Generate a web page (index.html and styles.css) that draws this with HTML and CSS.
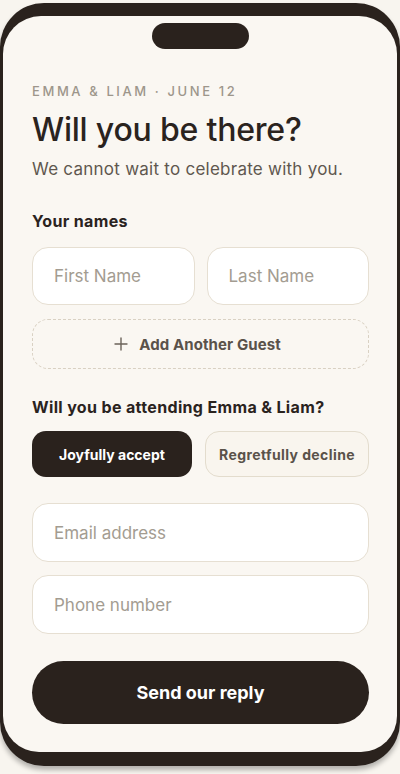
FILE: index.html
```html
<!DOCTYPE html>
<html>
<head>
<meta charset="utf-8">
<link rel="stylesheet" href="styles.css">
</head>
<body>
<div class="phone">
  <div class="screen">
    <div class="notch"></div>
    <div class="eyebrow">EMMA &amp; LIAM · JUNE 12</div>
    <h1 class="title">Will you be there?</h1>
    <p class="subtitle">We cannot wait to celebrate with you.</p>
    <div class="label">Your names</div>
    <div class="name-row">
      <div class="field">First Name</div>
      <div class="field">Last Name</div>
    </div>
    <div class="add-guest">
      <svg class="plus" width="14" height="14" viewBox="0 0 14 14"><path d="M7 1v12M1 7h12" stroke="#6b635a" stroke-width="1.4" stroke-linecap="round"/></svg>
      <span>Add Another Guest</span>
    </div>
    <div class="label label-attend">Will you be attending Emma &amp; Liam?</div>
    <div class="choice-row">
      <div class="choice choice-on">Joyfully accept</div>
      <div class="choice choice-off">Regretfully decline</div>
    </div>
    <div class="field field-wide">Email address</div>
    <div class="field field-wide field-phone">Phone number</div>
    <div class="send">Send our reply</div>
  </div>
</div>
</body>
</html>
```
FILE: styles.css
```css
html, body {
  margin: 0;
  padding: 0;
  background: #f8f5ef;
}
body {
  font-family: "Inter", "Lato", sans-serif;
  width: 400px;
  height: 774px;
  overflow: hidden;
}
.phone {
  margin-top: 3px;
  height: 763px;
  box-sizing: border-box;
  padding: 13px 3px 14px;
  border-radius: 44px;
  background: #2a221d;
  box-shadow: 0 4px 5px rgba(0, 0, 0, 0.28);
}
.screen {
  height: 100%;
  box-sizing: border-box;
  border-radius: 38px 38px 36px 36px;
  background: #faf7f2;
  padding: 7px 28px 0 29px;
  display: flex;
  flex-direction: column;
}
.notch {
  align-self: center;
  width: 97px;
  height: 26px;
  border-radius: 13px;
  background: #2a221d;
  margin-left: -1px;
}
.eyebrow {
  margin-top: 34px;
  font-size: 13px;
  line-height: 16px;
  letter-spacing: 2.6px;
  color: #9d968b;
  font-weight: 500;
}
.title {
  margin: 11px 0 0;
  font-size: 32px;
  line-height: 40px;
  font-weight: 500;
  letter-spacing: -0.2px;
  color: #2a231e;
}
.subtitle {
  margin: 8px 0 0;
  font-size: 17px;
  line-height: 22px;
  letter-spacing: 0.25px;
  color: #5f574f;
}
.label {
  margin-top: 31px;
  font-size: 16px;
  line-height: 20px;
  font-weight: 700;
  letter-spacing: 0.35px;
  color: #2a231e;
}
.name-row {
  margin-top: 16px;
  display: grid;
  grid-template-columns: 1fr 1fr;
  gap: 12px;
}
.field {
  height: 58px;
  box-sizing: border-box;
  border: 1px solid #e6dfd2;
  border-radius: 16px;
  background: #ffffff;
  padding-left: 21px;
  display: flex;
  align-items: center;
  font-size: 17px;
  color: #a39c91;
}
.add-guest {
  margin-top: 14px;
  height: 50px;
  box-sizing: border-box;
  border: 1.5px dashed #d9d1c3;
  border-radius: 16px;
  display: flex;
  align-items: center;
  justify-content: center;
  gap: 11px;
  font-size: 15px;
  font-weight: 700;
  letter-spacing: 0.1px;
  color: #5a524a;
}
.plus {
  margin-left: -6px;
}
.label-attend {
  margin-top: 28px;
}
.choice-row {
  margin-top: 14px;
  display: flex;
  gap: 13px;
}
.choice {
  height: 46px;
  box-sizing: border-box;
  border-radius: 14px;
  display: flex;
  align-items: center;
  justify-content: center;
  font-size: 14px;
  font-weight: 700;
}
.choice-on {
  width: 160px;
  background: #2a221d;
  color: #ffffff;
}
.choice-off {
  flex: 1;
  border: 1.5px solid #e3dccd;
  background: #f9f5ee;
  color: #5a524a;
  letter-spacing: 0.4px;
}
.field-wide {
  margin-top: 26px;
  height: 59px;
}
.field-phone {
  margin-top: 13px;
}
.send {
  margin-top: 27px;
  height: 63px;
  border-radius: 32px;
  background: #2a221d;
  color: #ffffff;
  display: flex;
  align-items: center;
  justify-content: center;
  font-size: 18px;
  font-weight: 700;
}
```
